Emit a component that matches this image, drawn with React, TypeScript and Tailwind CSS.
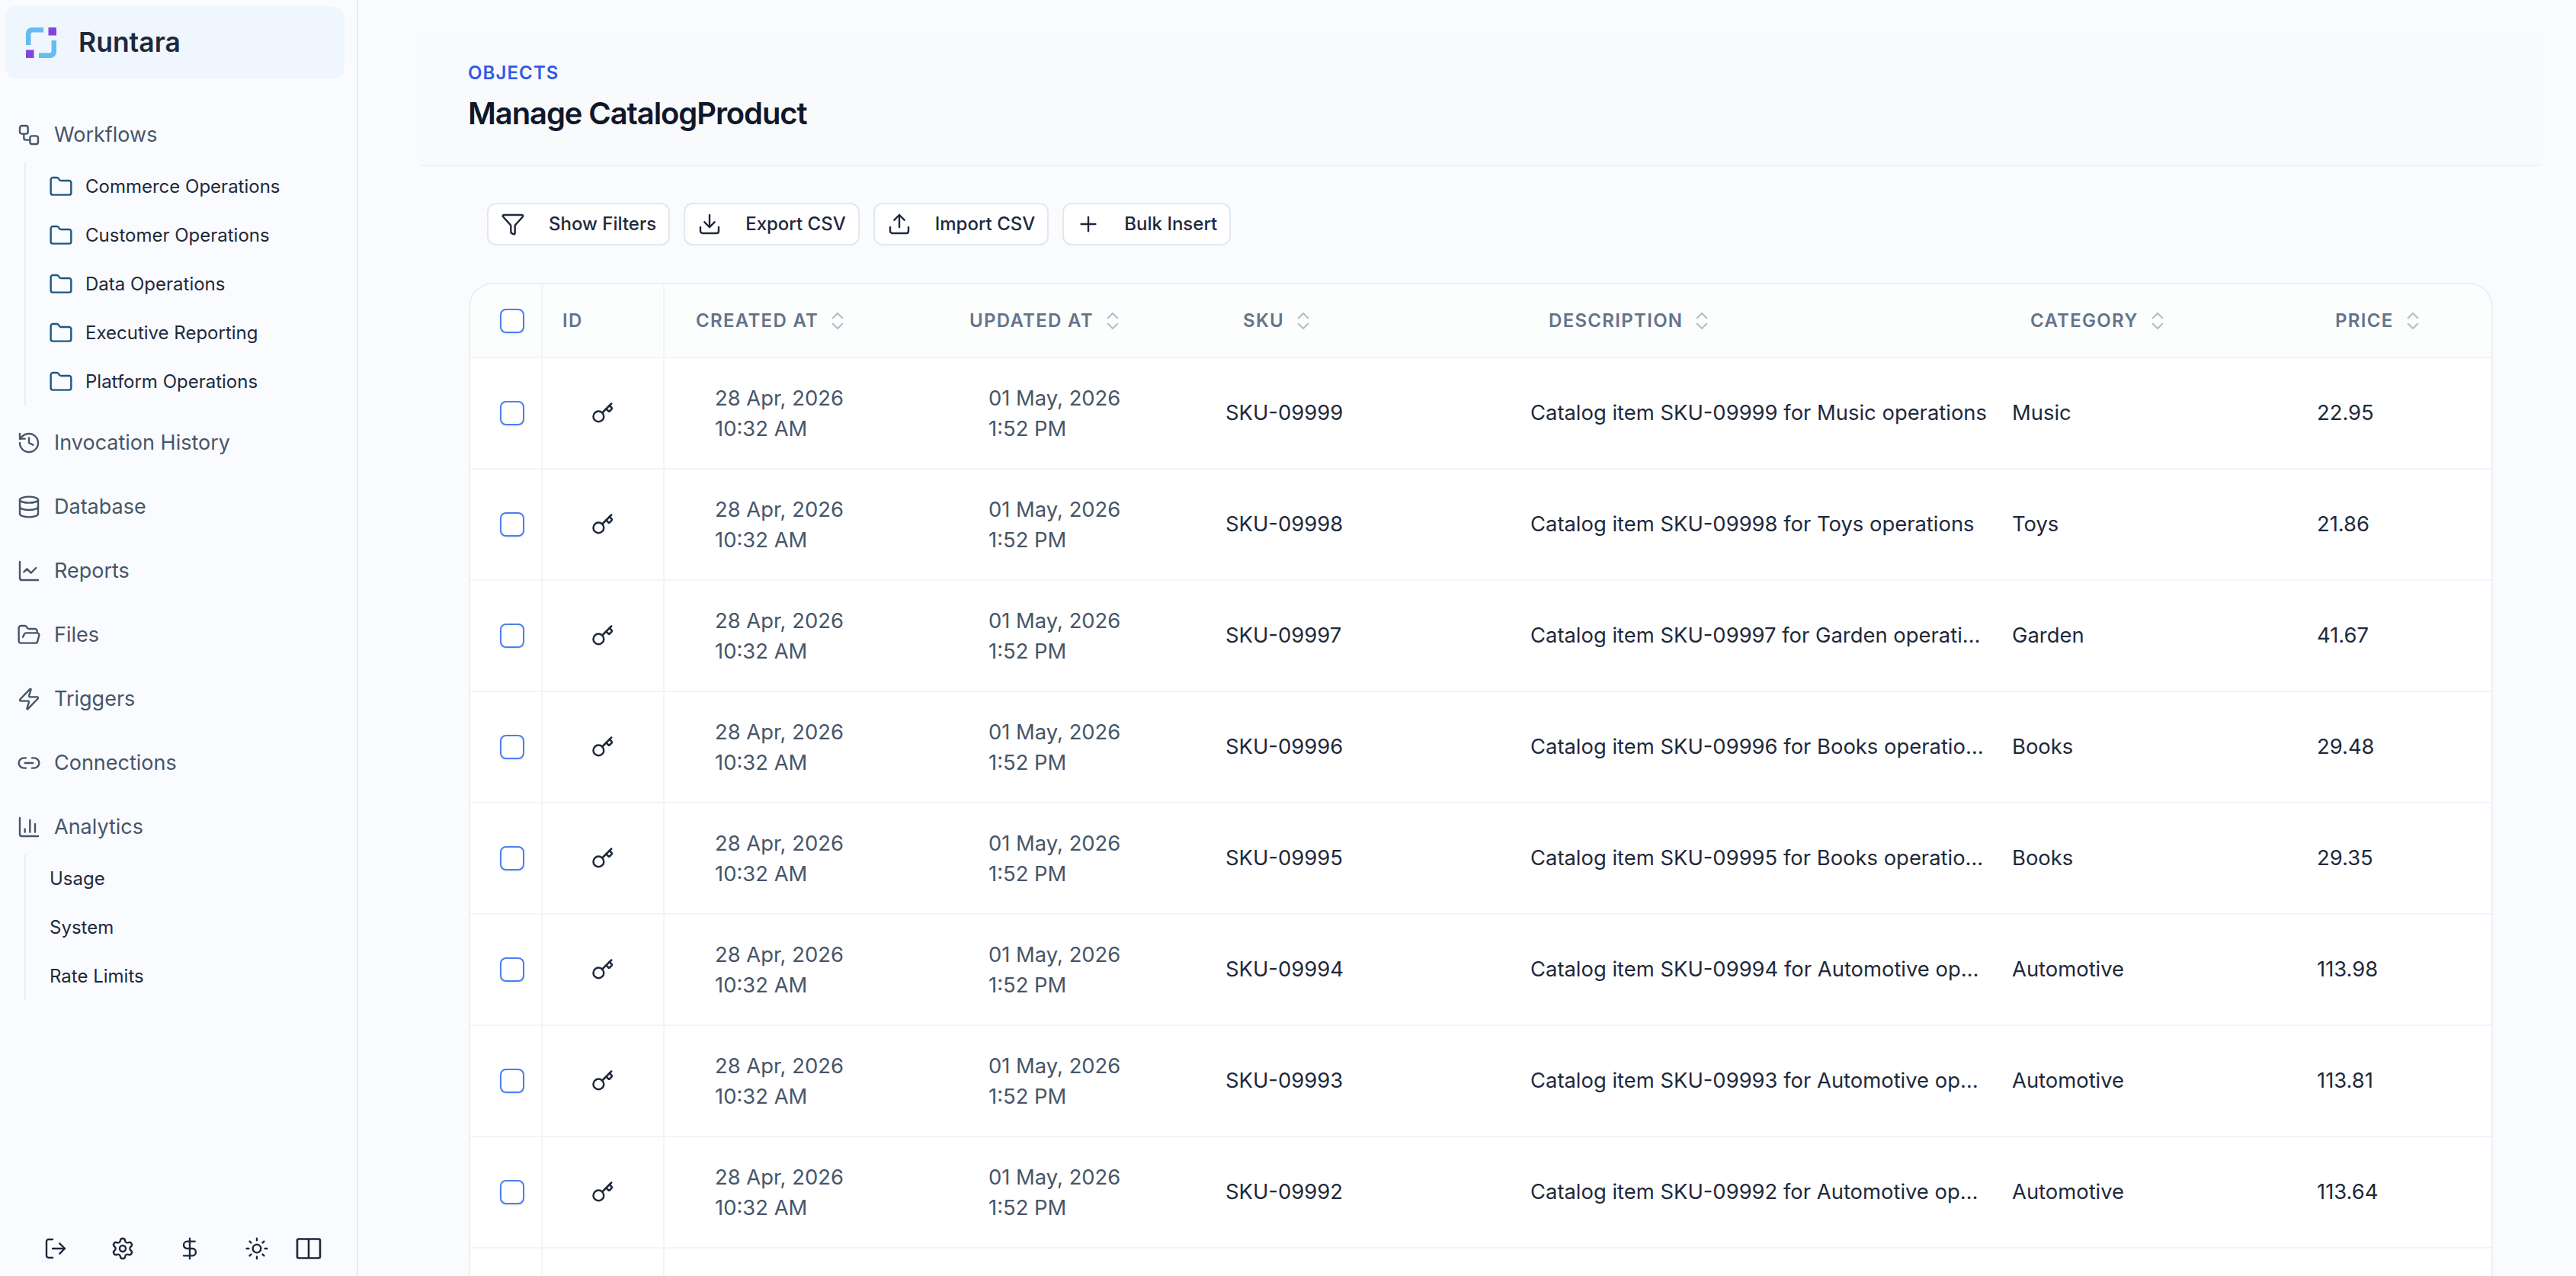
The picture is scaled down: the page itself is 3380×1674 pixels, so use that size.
import { ChartColumn, ChartLine, ChevronsUpDown, Database, DollarSign, Download, Filter, Folder, FolderOpen, History, Key, Link2, LogOut, Plus, Settings, Sun, Upload, Workflow, Zap } from 'lucide-react'
import type { ReactNode } from 'react'

const font = "font-['Inter',sans-serif]"

const rows = [
  ['SKU-09999', 'Catalog item SKU-09999 for Music operations', 'Music', '22.95'],
  ['SKU-09998', 'Catalog item SKU-09998 for Toys operations', 'Toys', '21.86'],
  ['SKU-09997', 'Catalog item SKU-09997 for Garden operations', 'Garden', '41.67'],
  ['SKU-09996', 'Catalog item SKU-09996 for Books operations', 'Books', '29.48'],
  ['SKU-09995', 'Catalog item SKU-09995 for Books operations', 'Books', '29.35'],
  ['SKU-09994', 'Catalog item SKU-09994 for Automotive operations', 'Automotive', '113.98'],
  ['SKU-09993', 'Catalog item SKU-09993 for Automotive operations', 'Automotive', '113.81'],
  ['SKU-09992', 'Catalog item SKU-09992 for Automotive operations', 'Automotive', '113.64'],
]

const gridCols = 'grid grid-cols-[95px_160px_359px_359px_401px_632px_400px_1fr]'

function Logo() {
  return (
    <svg viewBox="0 0 40 40" className="h-10 w-10">
      <path d="M23 0 H8 A8 8 0 0 0 0 8 V23 H6.5 V9 A2.5 2.5 0 0 1 9 6.5 H23 Z" fill="#63bdf0" />
      <path d="M17 40 H32 A8 8 0 0 0 40 32 V17 H33.5 V31 A2.5 2.5 0 0 1 31 33.5 H17 Z" fill="#63bdf0" />
      <rect x="29.5" y="0" width="10.5" height="10.5" fill="#8644dc" />
      <rect x="0" y="29.5" width="10.5" height="10.5" fill="#8644dc" />
    </svg>
  )
}

function PanelIcon() {
  return (
    <svg viewBox="0 0 34 28" className="ml-[35px] h-[28px] w-[34px]" fill="none" stroke="currentColor" strokeWidth="2.6">
      <rect x="2" y="1.5" width="30" height="25" rx="2" />
      <path d="M17 1.5 V26.5" />
    </svg>
  )
}

function NavItem({ icon, label }: { icon: ReactNode; label: string }) {
  return (
    <div className="flex h-[84px] items-center gap-[17px] pl-[22px] text-[27px] text-[#475569]">
      {icon}
      <span>{label}</span>
    </div>
  )
}

function SubItem({ label, folder }: { label: string; folder?: boolean }) {
  return (
    <div className={`flex h-[64px] items-center text-[24px] text-[#1e293b] ${folder ? 'gap-[16px] pl-[30px]' : 'pl-[31px]'}`}>
      {folder && <Folder className="h-[32px] w-[32px] text-[#1f5880]" strokeWidth={1.8} />}
      <span>{label}</span>
    </div>
  )
}

function Sidebar() {
  const navIcon = 'h-[32px] w-[32px] shrink-0'
  const footIcon = 'h-[32px] w-[32px]'
  return (
    <aside className="flex h-full w-[470px] shrink-0 flex-col border-r-[2px] border-[#e4e9f4] bg-[#f9fbfe]">
      <div className="ml-[6px] mt-[8px] flex h-[95px] w-[446px] items-center gap-[30px] rounded-[16px] bg-[#eff6fe] pl-[28px]">
        <Logo />
        <span className="-ml-[1px] text-[35.5px] font-semibold text-[#1e293b]">Runtara</span>
      </div>
      <div className="mt-[32px] flex-1">
        <NavItem icon={<Workflow className={navIcon} strokeWidth={1.8} />} label="Workflows" />
        <div className="-mt-[6px] mb-[6px] ml-[32px] border-l-[2px] border-[#e9eef6]">
          <SubItem folder label="Commerce Operations" />
          <SubItem folder label="Customer Operations" />
          <SubItem folder label="Data Operations" />
          <SubItem folder label="Executive Reporting" />
          <SubItem folder label="Platform Operations" />
        </div>
        <NavItem icon={<History className={navIcon} strokeWidth={1.8} />} label="Invocation History" />
        <NavItem icon={<Database className={navIcon} strokeWidth={1.8} />} label="Database" />
        <NavItem icon={<ChartLine className={navIcon} strokeWidth={1.8} />} label="Reports" />
        <NavItem icon={<FolderOpen className={navIcon} strokeWidth={1.8} />} label="Files" />
        <NavItem icon={<Zap className={navIcon} strokeWidth={1.8} />} label="Triggers" />
        <NavItem icon={<Link2 className={navIcon} strokeWidth={1.8} />} label="Connections" />
        <NavItem icon={<ChartColumn className={navIcon} strokeWidth={1.8} />} label="Analytics" />
        <div className="-mt-[6px] ml-[32px] border-l-[2px] border-[#e9eef6]">
          <SubItem label="Usage" />
          <SubItem label="System" />
          <SubItem label="Rate Limits" />
        </div>
      </div>
      <div className="flex h-[72px] items-center pl-[57px] text-[#1e293b]">
        <LogOut className={footIcon} strokeWidth={1.8} />
        <Settings className={`ml-[56px] ${footIcon}`} strokeWidth={1.8} />
        <DollarSign className={`ml-[56px] ${footIcon}`} strokeWidth={1.8} />
        <Sun className={`ml-[56px] ${footIcon}`} strokeWidth={1.8} />
        <PanelIcon />
      </div>
    </aside>
  )
}

function ToolButton({ icon, label }: { icon: ReactNode; label: string }) {
  return (
    <button className="flex h-[56px] items-center gap-[31px] rounded-[12px] border-[2px] border-[#e2e8f0] bg-white px-[16px] text-[24px] font-medium text-[#1e293b]">
      {icon}
      <span>{label}</span>
    </button>
  )
}

function HeaderCell({ label }: { label: string }) {
  return (
    <div className="flex items-center gap-[10px] pl-[41px] text-[24px] font-semibold tracking-[1.3px] text-[#64748b]">
      <span>{label}</span>
      <ChevronsUpDown className="h-[30px] w-[30px] text-[#b6bfcc]" strokeWidth={1.8} />
    </div>
  )
}

function Checkbox() {
  return <span className="ml-[39px] h-[32px] w-[32px] rounded-[8px] border-[2px] border-[#4a7ff0] bg-white shadow-sm" />
}

function Row({ row }: { row: string[] }) {
  const [sku, desc, cat, price] = row
  return (
    <div className={`${gridCols} h-[146px] border-t-[2px] border-[#f1f5f9] bg-white text-[27.4px] text-[#1e293b]`}>
      <div className="flex items-center border-r-[2px] border-[#f1f5f9]">
        <Checkbox />
      </div>
      <div className="flex items-center justify-center border-r-[2px] border-[#f1f5f9]">
        <Key className="h-[30px] w-[30px]" strokeWidth={2} />
      </div>
      <div className="flex flex-col justify-center pl-[66px] leading-[40px] text-[#475569]">
        <span>28 Apr, 2026</span>
        <span>10:32 AM</span>
      </div>
      <div className="flex flex-col justify-center pl-[66px] leading-[40px] text-[#475569]">
        <span>01 May, 2026</span>
        <span>1:52 PM</span>
      </div>
      <div className="flex items-center pl-[18px]">{sku}</div>
      <div className="flex items-center pl-[17px] pr-[14px]"><span className="truncate">{desc}</span></div>
      <div className="flex items-center pl-[17px]">{cat}</div>
      <div className="flex items-center pl-[17px]">{price}</div>
    </div>
  )
}

export default function App() {
  return (
    <div className={`${font} flex h-[1674px] w-[3380px] overflow-hidden bg-[#fafbfc]`}>
      <Sidebar />
      <main className="min-w-0 flex-1 pl-[81px] pr-[44px] pt-[40px]">
        <header className="h-[178px] border-b-[2px] border-[#eef2f7] bg-[#f9fafc] pl-[63px] pt-[42px]">
          <div className="text-[24px] font-semibold leading-[28px] tracking-[1.1px] text-[#2f5be7]">OBJECTS</div>
          <h1 className="mt-[15px] text-[40px] font-semibold leading-[48px] tracking-[-1.1px] text-[#0f172a]">Manage CatalogProduct</h1>
        </header>
        <div className="ml-[88px] mt-[48px] flex gap-[18px]">
          <ToolButton icon={<Filter className="h-[32px] w-[32px]" strokeWidth={1.8} />} label="Show Filters" />
          <ToolButton icon={<Download className="h-[32px] w-[32px]" strokeWidth={1.8} />} label="Export CSV" />
          <ToolButton icon={<Upload className="h-[32px] w-[32px]" strokeWidth={1.8} />} label="Import CSV" />
          <ToolButton icon={<Plus className="h-[32px] w-[32px]" strokeWidth={1.8} />} label="Bulk Insert" />
        </div>
        <div className="ml-[64px] mr-[65px] mt-[49px] overflow-hidden rounded-t-[32px] border-x-[2px] border-t-[2px] border-[#eceff7] bg-[#fcfdfd]">
          <div className={`${gridCols} h-[95px]`}>
            <div className="flex items-center border-r-[2px] border-[#f1f5f9]">
              <Checkbox />
            </div>
            <div className="flex items-center border-r-[2px] border-[#f1f5f9] pl-[26px] text-[24px] font-semibold tracking-[1.3px] text-[#64748b]">ID</div>
            <HeaderCell label="CREATED AT" />
            <HeaderCell label="UPDATED AT" />
            <HeaderCell label="SKU" />
            <HeaderCell label="DESCRIPTION" />
            <HeaderCell label="CATEGORY" />
            <HeaderCell label="PRICE" />
          </div>
          {rows.map((r) => <Row key={r[0]} row={r} />)}
          <div className={`${gridCols} h-[146px] border-t-[2px] border-[#f1f5f9] bg-white`}>
            <div className="border-r-[2px] border-[#f1f5f9]" />
            <div className="border-r-[2px] border-[#f1f5f9]" />
          </div>
        </div>
      </main>
    </div>
  )
}
